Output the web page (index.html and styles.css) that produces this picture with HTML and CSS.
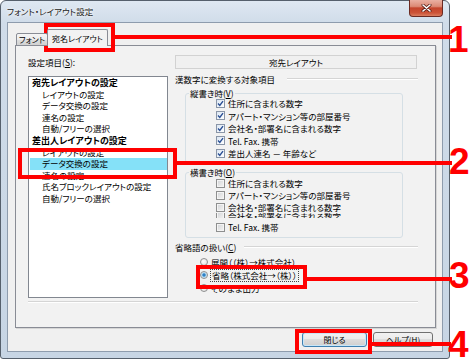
FILE: index.html
```html
<!DOCTYPE html>
<html lang="ja">
<head>
<meta charset="utf-8">
<title>フォント・レイアウト設定</title>
<link rel="stylesheet" href="styles.css">
</head>
<body>
<div class="stage">
  <div class="window">
    <div class="titlebar">
      <span class="title">フォント・レイアウト設定</span>
      <span class="close"><svg width="11" height="8" viewBox="0 0 11 8"><path d="M2 1 L9 7 M9 1 L2 7" stroke="#5a2018" stroke-width="3" stroke-linecap="round"/><path d="M2 1 L9 7 M9 1 L2 7" stroke="#fff" stroke-width="1.6" stroke-linecap="round"/></svg></span>
    </div>
    <div class="client">
      <div class="tabs">
        <div class="tab">フォント</div>
        <div class="tab active">宛名レイアウト</div>
      </div>
      <div class="panel">
        <div class="row">
          <div class="leftcol">
            <div class="lbl">設定項目(<u>S</u>):</div>
            <ul class="list">
              <li class="head">宛先レイアウトの設定</li>
              <li>レイアウトの設定</li>
              <li>データ交換の設定</li>
              <li>連名の設定</li>
              <li>自動/フリーの選択</li>
              <li class="head">差出人レイアウトの設定</li>
              <li>レイアウトの設定</li>
              <li class="sel">データ交換の設定</li>
              <li>連名の設定</li>
              <li>氏名ブロックレイアウトの設定</li>
              <li>自動/フリーの選択</li>
            </ul>
          </div>
          <div class="rightcol">
            <div class="header">宛先レイアウト</div>
            <div class="sep"><span>漢数字に変換する対象項目</span><span class="ln"></span></div>
            <fieldset class="group g1">
              <legend>縦書き時(<u>V</u>)</legend>
              <div class="chk"><span class="cb on"><svg width="7" height="7" viewBox="0 0 7 7"><path d="M1 3.6 L2.8 5.4 L6 1.2" fill="none" stroke="#2a4f94" stroke-width="1.4"/></svg></span>住所に含まれる数字</div>
              <div class="chk"><span class="cb on"><svg width="7" height="7" viewBox="0 0 7 7"><path d="M1 3.6 L2.8 5.4 L6 1.2" fill="none" stroke="#2a4f94" stroke-width="1.4"/></svg></span>アパート・マンション等の部屋番号</div>
              <div class="chk"><span class="cb on"><svg width="7" height="7" viewBox="0 0 7 7"><path d="M1 3.6 L2.8 5.4 L6 1.2" fill="none" stroke="#2a4f94" stroke-width="1.4"/></svg></span>会社名・部署名に含まれる数字</div>
              <div class="chk"><span class="cb on"><svg width="7" height="7" viewBox="0 0 7 7"><path d="M1 3.6 L2.8 5.4 L6 1.2" fill="none" stroke="#2a4f94" stroke-width="1.4"/></svg></span>Tel. Fax. 携帯</div>
              <div class="chk"><span class="cb on"><svg width="7" height="7" viewBox="0 0 7 7"><path d="M1 3.6 L2.8 5.4 L6 1.2" fill="none" stroke="#2a4f94" stroke-width="1.4"/></svg></span>差出人連名 － 年齢など</div>
            </fieldset>
            <fieldset class="group g2">
              <legend>横書き時(<u>O</u>)</legend>
              <div class="chk"><span class="cb"></span>住所に含まれる数字</div>
              <div class="chk"><span class="cb"></span>アパート・マンション等の部屋番号</div>
              <div class="chk"><span class="cb"></span>会社名・部署名に含まれる数字</div>
              <div class="strip"><div class="chk"><span class="cb"></span>会社名・部署名に含まれる数字</div></div>
              <div class="chk tel"><span class="cb"></span>Tel. Fax. 携帯</div>
            </fieldset>
            <div class="sep sep2"><span>省略語の扱い(<u>C</u>)</span><span class="ln"></span></div>
            <div class="rad first"><span class="rb"></span>展開（（株）→株式会社）</div>
            <div class="rad"><span class="rb on"></span><span class="focus">省略（株式会社→（株））</span></div>
            <div class="rad"><span class="rb"></span>そのまま出力</div>
          </div>
        </div>
        <div class="hr"></div>
      </div>
      <div class="buttons">
        <div class="btn def">閉じる</div>
        <div class="btn help">ヘルプ(<u>H</u>)</div>
      </div>
    </div>
  </div>

  <div class="ann box1"></div>
  <div class="aline line1"></div>
  <div class="anum num1">1</div>

  <div class="ann box2"></div>
  <div class="aline line2"></div>
  <div class="anum num2">2</div>

  <div class="ann box3"></div>
  <div class="aline line3"></div>
  <div class="anum num3">3</div>

  <div class="ann box4"></div>
  <div class="aline line4"></div>
  <div class="anum num4">4</div>
</div>
</body>
</html>
```
FILE: styles.css
```css
* { box-sizing: border-box; margin: 0; padding: 0; }
html, body { margin: 0; background: #fff; }
body {
  font-family: "Noto Sans CJK JP", "Noto Sans", sans-serif;
  font-size: 8.5px;
  color: #000;
  font-feature-settings: "palt";
}
u { text-decoration: underline; text-underline-offset: 1px; }

.stage { position: relative; width: 470px; height: 364px; overflow: hidden; background: #fff; }

.window {
  width: 450px; height: 359px;
  border: 1px solid #56606c;
  border-radius: 6px 6px 3px 3px;
  background: linear-gradient(180deg, #dfe8f2 0, #d0dce9 22px, #c7d5e4 100%);
  padding: 0 6px 6px;
  display: flex; flex-direction: column;
}
.titlebar { height: 21px; flex: none; display: flex; justify-content: space-between; align-items: flex-start; }
.title { line-height: 21px; color: #1a1a1a; text-shadow: 0 0 4px #fff, 0 0 2px #fff; }
.close {
  width: 34px; height: 17px; margin-top: -1px;
  border: 1px solid #6b2a22; border-top: none;
  border-radius: 0 0 4px 4px;
  background: linear-gradient(180deg, #eab0a2 0, #dc8a75 40%, #c4452c 50%, #cc5337 80%, #da7e60 100%);
  display: flex; align-items: center; justify-content: center;
}

.client {
  flex: 1;
  border: 1px solid #8e9cad;
  background: #f0f0f0;
  padding: 6px 6px 0 7px;
  display: flex; flex-direction: column;
}

.tabs { height: 17px; flex: none; display: flex; align-items: flex-end; padding-left: 1px; position: relative; z-index: 1; }
.tab {
  height: 13px; width: 32px;
  border: 1px solid #898c95;
  border-radius: 2px 2px 0 0;
  background: linear-gradient(180deg, #f5f5f5 0, #ececec 50%, #dedede 50%, #d2d2d2 100%);
  text-align: center; line-height: 12px; font-size: 8px;
  white-space: nowrap; overflow: hidden;
}
.tab.active { height: 17px; width: 61px; margin-left: -1px; border-bottom: none; background: #f2f2f2; line-height: 17px; }

.panel {
  height: 283px; flex: none;
  margin-top: -1px;
  border: 1px solid #898c95;
  background: #f2f2f2;
  box-shadow: 1px 1px 0 #d6d6d6;
  padding: 9px 17px 0 12px;
}
.row { display: flex; gap: 6px; }
.leftcol { width: 140px; flex: none; }
.rightcol { width: 244px; flex: none; }

.lbl { height: 14px; line-height: 14px; margin-bottom: 7px; }
.list { list-style: none; height: 222px; border: 1px solid #828790; background: #fff; overflow: hidden; }
.list li { height: 11.6px; line-height: 11.6px; padding-left: 13px; white-space: nowrap; }
.list li.head { padding-left: 3px; font-weight: bold; font-size: 9px; }
.list li.sel { background: #85e1f8; margin-left: 1px; padding-left: 12px; }

.header { height: 14px; margin: 0 1px; border: 1px solid #d2d2d2; background: #f0f0f0; text-align: center; line-height: 12px; }
.sep { display: flex; align-items: center; height: 12px; margin-top: 4px; padding-left: 1px; white-space: nowrap; }
.sep .ln { flex: 1; height: 2px; border-top: 1px solid #d5d5d5; border-bottom: 1px solid #fff; margin-left: 12px; }
.sep2 { margin-top: 3px; }
.sep2 .ln { margin-left: 8px; }

.group { margin: 4px 15px 0 11px; border: 1px solid #d5dfe5; border-radius: 3px; padding: 0 0 2px 0; min-width: 0; }
.group legend { margin-left: 3px; padding: 0 1px; line-height: 8px; }
.g2 { margin-top: 5.5px; padding: 1px 0 4px 0; }

.chk { display: flex; align-items: center; height: 12.5px; padding-left: 30px; white-space: nowrap; }
.g2 .chk { height: 12px; }
.strip { height: 5px; overflow: hidden; }
.strip .chk { margin-top: -3.5px; }
.g2 .tel { margin-top: 3px; }

.cb {
  width: 9px; height: 9px; flex: none; margin-right: 3px;
  border: 1px solid #8e8f8f;
  background: linear-gradient(135deg, #cfd2d6 0, #e8e8e8 60%, #f2f2f2 100%);
  box-shadow: inset 0 0 0 1px #f4f4f4;
  display: flex; align-items: center; justify-content: center;
}
.cb.on { background: linear-gradient(135deg, #dbe6f3 0, #ffffff 100%); box-shadow: none; border-color: #8a96a8; }

.rad { display: flex; align-items: center; height: 13px; padding-left: 26px; white-space: nowrap; }
.rad.first { margin-top: 2.5px; }
.rb {
  width: 8px; height: 8px; flex: none; margin-right: 3px;
  border: 1px solid #8e8f8f; border-radius: 50%;
  background: radial-gradient(circle at 40% 40%, #ffffff 0, #dcdcdc 100%);
}
.rb.on { background: radial-gradient(circle at 50% 50%, #2f7fc4 0, #2f7fc4 30%, #9fd2f2 45%, #f2f2f2 80%); }
.focus { outline: 1px dotted #444; padding: 0 1px; line-height: 11px; }

.hr { height: 2px; margin-top: 3px; border-top: 1px solid #d5d5d5; border-bottom: 1px solid #fff; }

.buttons { display: flex; justify-content: flex-end; gap: 6px; margin-top: 4px; padding-right: 3px; }
.btn {
  height: 15px;
  border: 1px solid #707070; border-radius: 3px;
  background: linear-gradient(180deg, #f2f2f2 0, #ebebeb 50%, #dddddd 50%, #cfcfcf 100%);
  text-align: center; line-height: 13px; font-size: 8px;
}
.btn.def { width: 65px; border-color: #3c7fb1; box-shadow: inset 0 0 0 1px #c8e6f8; }
.btn.help { width: 60px; }

/* red annotations */
.ann { position: absolute; border: 4px solid #ff0000; }
.aline { position: absolute; height: 4px; background: #ff0000; }
.anum {
  position: absolute;
  font-family: "Liberation Sans", Arial, sans-serif;
  font-weight: bold; font-size: 37px; line-height: 36px;
  color: #ff0000;
}
.box1 { left: 44px; top: 23px; width: 71px; height: 29px; }
.line1 { left: 114px; top: 35px; width: 338px; }
.num1 { left: 448px; top: 22px; }

.box2 { left: 18px; top: 148px; width: 159px; height: 31px; }
.line2 { left: 176px; top: 161px; width: 276px; }
.num2 { left: 449px; top: 144px; }

.box3 { left: 196px; top: 265px; width: 111px; height: 24px; }
.line3 { left: 306px; top: 277px; width: 146px; }
.num3 { left: 449px; top: 258px; }

.box4 { left: 295px; top: 329px; width: 77px; height: 25px; }
.line4 { left: 371px; top: 342px; width: 80px; }
.num4 { left: 448px; top: 327px; }
```
